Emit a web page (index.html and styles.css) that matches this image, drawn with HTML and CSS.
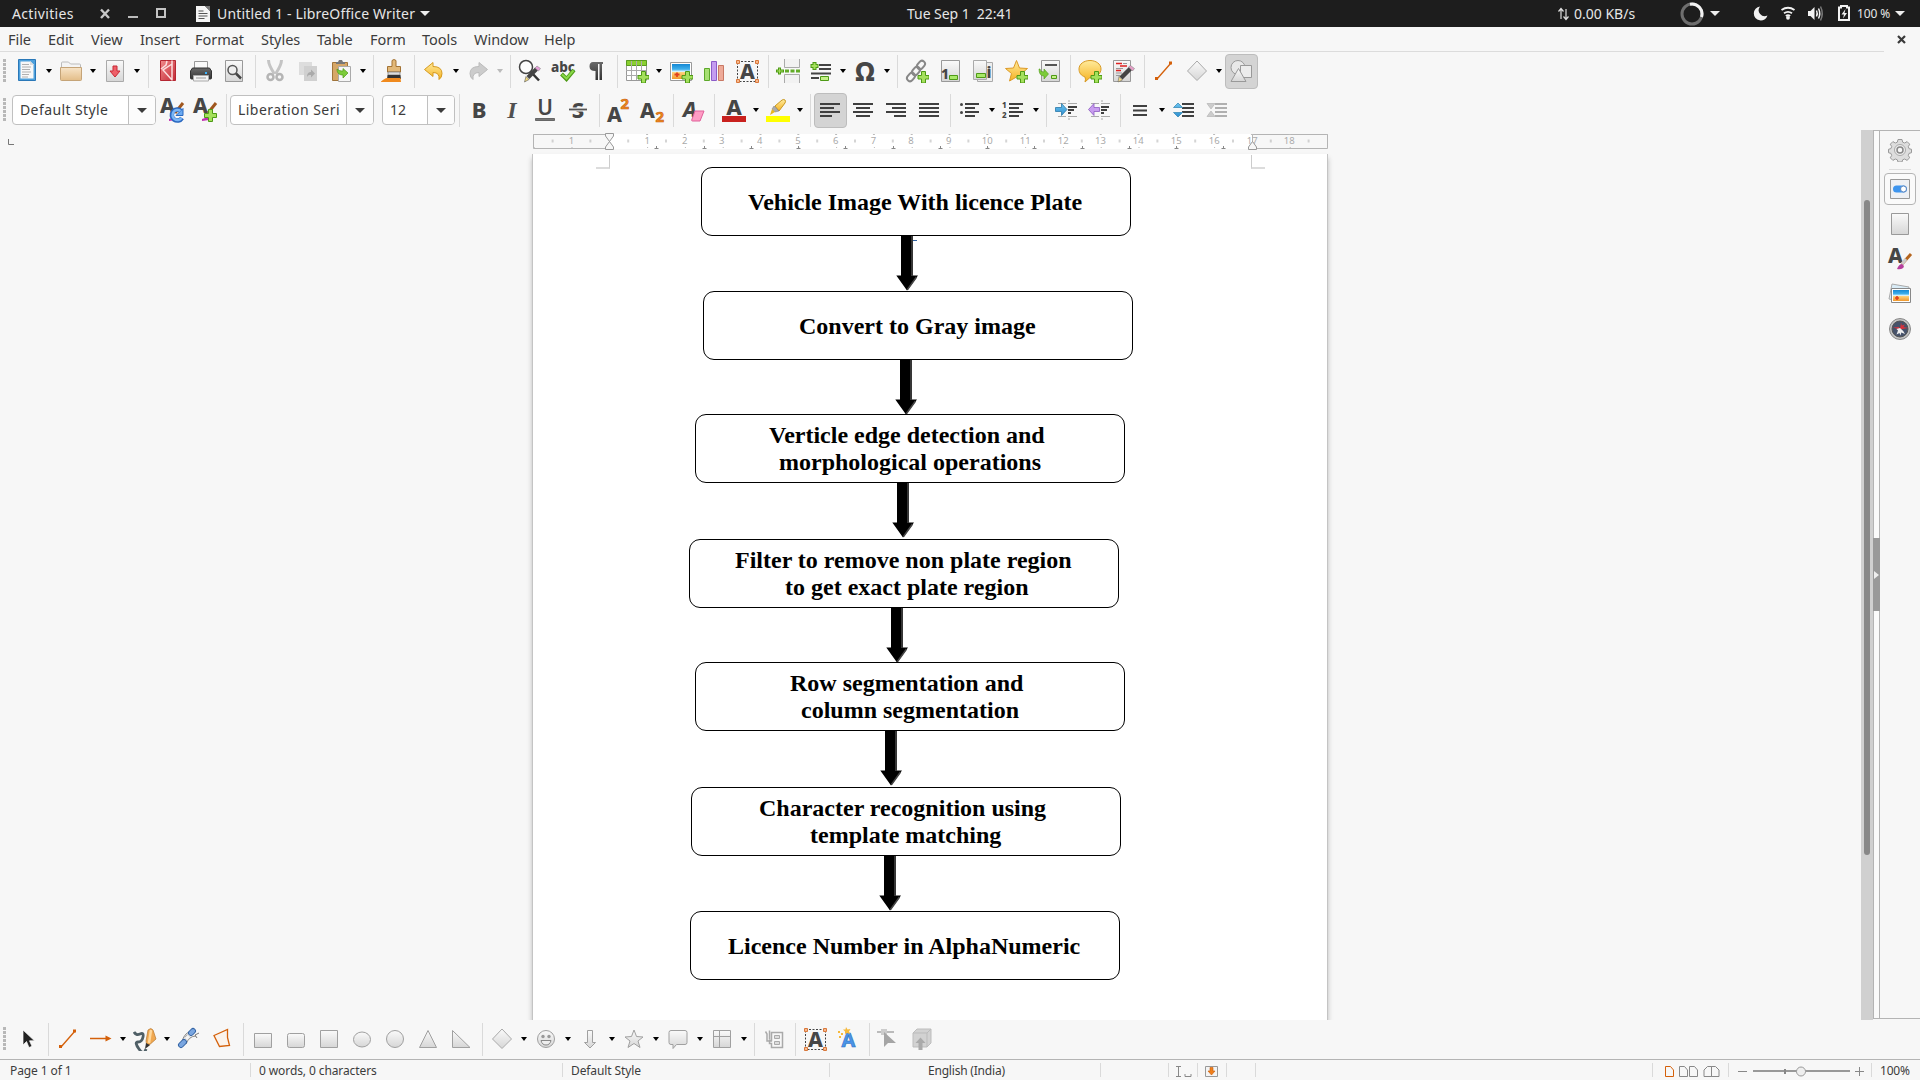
FILE: index.html
```html
<!DOCTYPE html>
<html lang="en">
<head>
<meta charset="utf-8">
<title>Untitled 1 - LibreOffice Writer</title>
<link rel="stylesheet" href="styles.css">
</head>
<body>
<svg class="defs" width="0" height="0" aria-hidden="true">
  <defs>
    <linearGradient id="gGray" x1="0" y1="0" x2="0" y2="1"><stop offset="0" stop-color="#fafafa"/><stop offset="1" stop-color="#d6d6d6"/></linearGradient>
    <linearGradient id="gDark" x1="0" y1="0" x2="0" y2="1"><stop offset="0" stop-color="#6a6a6a"/><stop offset="1" stop-color="#333"/></linearGradient>
    <linearGradient id="gGold" x1="0" y1="0" x2="0" y2="1"><stop offset="0" stop-color="#ffeb9c"/><stop offset="1" stop-color="#f5b222"/></linearGradient>
    <linearGradient id="gTan" x1="0" y1="0" x2="0" y2="1"><stop offset="0" stop-color="#f7e4c8"/><stop offset="1" stop-color="#e3bd88"/></linearGradient>
    <linearGradient id="gBlue" x1="0" y1="0" x2="0" y2="1"><stop offset="0" stop-color="#6cc4f0"/><stop offset="1" stop-color="#2f8fd0"/></linearGradient>
    <linearGradient id="gSky" x1="0" y1="0" x2="0" y2="1"><stop offset="0" stop-color="#1588d4"/><stop offset=".35" stop-color="#3fb0ec"/><stop offset=".5" stop-color="#d4f0fb"/><stop offset=".56" stop-color="#ffd27c"/><stop offset="1" stop-color="#f0982c"/></linearGradient>
    <linearGradient id="gRed" x1="0" y1="0" x2="1" y2="1"><stop offset="0" stop-color="#f08a8a"/><stop offset="1" stop-color="#c42a36"/></linearGradient>
    <pattern id="halfTicks" x="76.3" y="0" width="37.8" height="25" patternUnits="userSpaceOnUse">
      <path d="M18.900 10.500v3" stroke="#aaa"/><path d="M.5 5v1M.5 18v1M37.300 5v1" stroke="#bbb"/>
    </pattern>
  </defs>
  <symbol id="plus" viewBox="0 0 24 24"><path d="M16.500 12.500h4v4h3.500v3.500h-3.500v4h-4v-4h-3.500v-3.500h3.500z" fill="#a4e05c" stroke="#4e9a16"/></symbol>
  <symbol id="new" viewBox="0 0 24 24"><path d="M3.500.5h17v21h-17z" fill="#4da0dc" stroke="#2a78b8"/><path d="M5.500 2.500h10l3 3v14h-13z" fill="#f8f8f8"/><path d="M7 5.500h7M7 8h9M7 10.500h8M7 13h9M7 15.500h7M7 18h6" stroke="#b0b0b0"/><path d="M15 2v4h4z" fill="#ddd"/></symbol>
  <symbol id="open" viewBox="0 0 24 24"><path d="M2.500 6V4q0-1 1-1h6l2 2h9q1 0 1 1v4h-19z" fill="#f4f4f4" stroke="#bbb"/><path d="M1.500 8.500h21v12q0 1-1 1h-19q-1 0-1-1z" fill="url(#gTan)" stroke="#c5a478"/></symbol>
  <symbol id="save" viewBox="0 0 24 24"><path d="M3.500 1.500h17v21h-17z" fill="url(#gGray)" stroke="#aaa"/><path d="M10 7h4v5h3l-5 6-5-6h3z" fill="#ee5f68" stroke="#c82834"/></symbol>
  <symbol id="pdf" viewBox="0 0 24 24"><path d="M4.500 1.500h15v20h-15z" fill="url(#gRed)" stroke="#b52732"/><path d="M16 1.500v20M16 5L7 11l9 10M5 10l5-4 1-4" fill="none" stroke="#fbdede" stroke-width="1.500"/></symbol>
  <symbol id="print" viewBox="0 0 24 24"><path d="M5.500 2.500h13v8h-13z" fill="#fafafa" stroke="#999"/><path d="M3.500 9h17l2 3v7q0 1-1 1h-19q-1 0-1-1v-7z" fill="url(#gDark)" stroke="#333"/><path d="M16 13h2v2h-2z" fill="#39b4ff"/><path d="M4.500 16.500h15v5.500h-15z" fill="#f3f3f3" stroke="#aaa"/><path d="M7 19h10" stroke="#999"/></symbol>
  <symbol id="preview" viewBox="0 0 24 24"><path d="M3.500 1.500h17v21h-17z" fill="url(#gGray)" stroke="#999"/><circle cx="10.500" cy="11" r="4.500" fill="#eee" stroke="#555" stroke-width="1.500"/><path d="M14 14.500l5 5" stroke="#444" stroke-width="2.500"/></symbol>
  <symbol id="cut" viewBox="0 0 24 24"><path d="M5.500 1q0 5 6 14M18.500 1q0 5-6 14" fill="none" stroke="#c4c4c4" stroke-width="3"/><circle cx="7.500" cy="18" r="3" fill="none" stroke="#b5b5b5" stroke-width="2.500"/><circle cx="16.500" cy="18" r="3" fill="none" stroke="#b5b5b5" stroke-width="2.500"/></symbol>
  <symbol id="copy" viewBox="0 0 24 24"><path d="M3 3h13v13H3z" fill="#ddd"/><path d="M8 7h13v15H8z" fill="#d0d0d0"/><path d="M11 18c0-4 2-5 4-5v-2.500l4 4-4 4V16c-2 0-3 0-4 2z" fill="#aaa"/></symbol>
  <symbol id="paste" viewBox="0 0 24 24"><path d="M3.500 3.500h15v18h-15z" fill="#d6a767" stroke="#a0743a"/><path d="M7 5V3h2l1-2h3l1 2h2v2z" fill="#777"/><path d="M9.500 7.500h12v15h-12z" fill="#f6f6f6" stroke="#aaa"/><path d="M8 10c0 4 2 6 6 6v3l5-5-5-4.500V12c-3 0-4-.5-6-2z" fill="#7ccb3a" stroke="#4e9a16" stroke-width=".7"/></symbol>
  <symbol id="brush" viewBox="0 0 24 24"><path d="M11 1.500q2-2 4 0v6h4.500v5.500h-13V7.500H11z" fill="#e2b878" stroke="#a37335"/><path d="M7 13h12v3H7z" fill="#ddd" stroke="#777" stroke-width=".7"/><path d="M6.500 16h13l.5 4H6z" fill="#333"/><path d="M0 22.500q4-3.500 6-3.500h13.500l.5 4H0z" fill="#f08a1e"/></symbol>
  <symbol id="undo" viewBox="0 0 24 24"><path d="M2.500 10.500l8.500-7v4q9 0 9 7 0 4-3 6 1-7-6-7v4z" fill="url(#gGold)" stroke="#d59a20"/></symbol>
  <symbol id="redo" viewBox="0 0 24 24"><path d="M21.500 10.500l-8.500-7v4q-9 0-9 7 0 4 3 6-1-7 6-7v4z" fill="#ccc" stroke="#bbb"/></symbol>
  <symbol id="find" viewBox="0 0 24 24"><circle cx="8" cy="8" r="6.500" fill="#fdfdfd" stroke="#444" stroke-width="1.500"/><path d="M13 13l8 8.500" stroke="#333" stroke-width="2.500"/><path d="M10 18.500L18.500 10" stroke="#444" stroke-width="4"/><path d="M19 7l3.500 2.500-2 2.500-3.500-3z" fill="#e6a0d8" stroke="#777" stroke-width=".5"/><path d="M8 17.500l3 3-4.500 2.500z" fill="#f2d97c" stroke="#555" stroke-width=".6"/></symbol>
  <symbol id="para" viewBox="0 0 24 24"><path d="M9 3h10v2h-1v16h-2.500V5H14v16h-2.500v-9q-6 0-6-4.500T9 3z" fill="url(#gDark)"/></symbol>
  <symbol id="table" viewBox="0 0 24 24"><path d="M1.500 1.500h20v20h-20z" fill="#fff" stroke="#999"/><path d="M1.500 1.500h20v5h-20z" fill="#8ad030" stroke="#5a9a20"/><path d="M1 11.500h20M1 16.500h20M6.500 2v19M11.500 2v19M16.500 2v19" stroke="#aaa"/><use href="#plus"/></symbol>
  <symbol id="image" viewBox="0 0 24 24"><path d="M1.500 3.500h21v18h-21z" fill="#fff" stroke="#999"/><path d="M3 5h18v15H3z" fill="url(#gSky)"/><path d="M8 13.500v4.500M5.500 15.500h5" stroke="#e0401c" stroke-width="1.800"/><use href="#plus"/></symbol>
  <symbol id="chart" viewBox="0 0 24 24"><path d="M2.500 9.500h5v12h-5z" fill="#a8e074" stroke="#5da82a"/><path d="M9.500 2.500h5v19h-5z" fill="#c49cf0" stroke="#8c5cc8"/><path d="M16.500 6.500h5v15h-5z" fill="#eeaa98" stroke="#c87864"/></symbol>
  <symbol id="break" viewBox="0 0 24 24"><path d="M8.500 0v8.500h15V0M8.500 24v-8.500h15V24" fill="#f2f2f2" stroke="#aaa"/><path d="M3.500 8.500v7M0 12h8" stroke="#4e9a16" stroke-width="3"/><path d="M3.500 9.500v5M1 12h6" stroke="#a4e05c"/><path d="M9 12h15" stroke="#62ac28" stroke-width="3" stroke-dasharray="4 1.500"/></symbol>
  <symbol id="field" viewBox="0 0 24 24"><path d="M10 6h12M10 10h12M2 14.500h20M2 19h8" stroke="#444" stroke-width="2"/><path d="M5.500 3v8M1.500 7h8" stroke="#4e9a16" stroke-width="4"/><path d="M5.500 4v6M2.500 7h6" stroke="#a4e05c" stroke-width="2"/><path d="M11.500 17.500h8v4h-8z" fill="#c4f088" stroke="#4e9a16"/></symbol>
  <symbol id="link" viewBox="0 0 24 24"><g fill="none" stroke="#888" stroke-width="2"><rect x="-4.500" y="-3" width="9" height="6" rx="3" transform="translate(6 18) rotate(-50)"/><rect x="-4.500" y="-3" width="9" height="6" rx="3" transform="translate(11 12) rotate(-50)"/><rect x="-4.500" y="-3" width="9" height="6" rx="3" transform="translate(16 6) rotate(-50)"/></g><use href="#plus"/></symbol>
  <symbol id="star" viewBox="0 0 24 24"><path d="M12.500 1.500l3 7.500 8 .5-6 5 2 7.500-7-4-7 4 2-7.500-6-5 8-.5z" fill="url(#gGold)" stroke="#dc9a28"/><use href="#plus"/></symbol>
  <symbol id="xref" viewBox="0 0 24 24"><path d="M4.500 1.500h18v21h-18z" fill="url(#gGray)" stroke="#999"/><path d="M8 6h12" stroke="#555" stroke-width="2"/><path d="M3 10q0 3 4 3v-3l4.500 5L7 20v-3q-5 0-5-7z" fill="#7ccb3a" stroke="#4e9a16" stroke-width=".6"/><path d="M14.500 16.500h5v3h-5z" fill="#c4f088" stroke="#4e9a16"/></symbol>
  <symbol id="comment" viewBox="0 0 24 24"><path d="M12 1.500c6 0 11 3.500 11 8.500s-5 8.500-11 8.500l-5 4.500q1-3 0-5c-4-1.500-6-4-6-8 0-5 5-8.500 11-8.500z" fill="url(#gGold)" stroke="#d89a24"/><use href="#plus"/></symbol>
  <symbol id="track" viewBox="0 0 24 24"><path d="M2.500 1.500h17v21h-17z" fill="url(#gGray)" stroke="#999"/><path d="M5 4.500h6M9 7h7M5 11.500h5" stroke="#d22" stroke-width="1.500"/><path d="M12 4.500h4M5 9.500h7M5 14h6M5 16.500h4" stroke="#999"/><path d="M10 19L19.500 9.500" stroke="#444" stroke-width="4.500"/><path d="M19.500 6.500l4 3-2 2.500-4-4z" fill="#e6a0c8" stroke="#777" stroke-width=".5"/><path d="M8 17.500l3.500 3.500-4.500 2z" fill="#f5dc8a" stroke="#555" stroke-width=".5"/></symbol>
  <symbol id="line" viewBox="0 0 24 24"><path d="M5 20L19 4" stroke="#d4600a" stroke-width="1.300"/><path d="M3 18h3v3H3zM17 2.500h3v3h-3z" fill="#d4600a"/></symbol>
  <symbol id="diamond" viewBox="0 0 24 24"><path d="M12 2l9.500 10L12 21.500 2.500 12z" fill="url(#gGray)" stroke="#aaa"/></symbol>
  <symbol id="shapes" viewBox="0 0 24 24"><circle cx="9" cy="8.500" r="7" fill="#e8e8e8" stroke="#999"/><path d="M11.500 6.500h11v12h-11z" fill="#ececec" stroke="#999"/><path d="M9.500 9.500l7.500 13H2z" fill="url(#gGray)" stroke="#999"/></symbol>
  <symbol id="left" viewBox="0 0 24 24"><path d="M2 6h20M2 10h14M2 14h20M2 18h12" class="ln"/></symbol>
  <symbol id="center" viewBox="0 0 24 24"><path d="M2 6h20M5 10h14M2 14h20M5 18h14" class="ln"/></symbol>
  <symbol id="right" viewBox="0 0 24 24"><path d="M2 6h20M8 10h14M2 14h20M10 18h12" class="ln"/></symbol>
  <symbol id="just" viewBox="0 0 24 24"><path d="M2 6h20M2 10h20M2 14h20M2 18h20" class="ln"/></symbol>
  <symbol id="bullets" viewBox="0 0 24 24"><path d="M7 6h14M7 10h10M7 14h14M7 18h10" class="ln"/><circle cx="3.500" cy="6.500" r="1.500" fill="#444"/><circle cx="3.500" cy="14.500" r="1.500" fill="#444"/></symbol>
  <symbol id="indent" viewBox="0 0 24 24"><path d="M4 5.500h8M4 18.500h8M14 5.500h9M14 18.500h9M14 3h2M14 21h2" stroke="#aaa"/><path d="M14 9h9M14 12h6M14 15h3" class="ln"/><path d="M1.500 9.500h6v-4l5.500 6-5.500 6v-4h-6z" fill="url(#gBlue)" stroke="#2a78a8" stroke-width=".8"/></symbol>
  <symbol id="outdent" viewBox="0 0 24 24"><path d="M4 5.500h8M4 18.500h8M14 5.500h9M14 18.500h9M14 3h2M14 21h2" stroke="#aaa"/><path d="M14 9h8M14 12h6M14 15h3" class="ln"/><path d="M12.500 9.500H7v-4L1.500 11.500l5.500 6v-4h5.500z" fill="#c89cf0" stroke="#8c5cc0" stroke-width=".8"/></symbol>
  <symbol id="spacing" viewBox="0 0 24 24"><path d="M5 8h14M5 12.500h14M5 17h14" class="ln"/></symbol>
  <symbol id="incpar" viewBox="0 0 24 24"><path d="M10 6h12M10 10h12M10 14h12M10 18h12" class="ln"/><path d="M1.500 9.500L6 5l4.500 4.500zM1.500 14.500L6 19l4.500-4.500z" fill="url(#gBlue)" stroke="#3a8cb8" stroke-width=".8"/></symbol>
  <symbol id="decpar" viewBox="0 0 24 24"><path d="M10 6h12M10 10h12M10 14h12M10 18h12" stroke="#b0b0b0" stroke-width="2"/><path d="M2 5.500h8L6 11zM2 18.500h8L6 13z" fill="#ccc" stroke="#bbb" stroke-width=".8"/></symbol>
  <symbol id="pointer" viewBox="0 0 24 24"><path d="M8 3v15l3.500-3.500 2.500 6 3-1.200-2.500-5.500h5z" fill="#222" stroke="#fff" stroke-width=".7"/></symbol>
  <symbol id="arrow" viewBox="0 0 24 24"><path d="M1 11.500h17" stroke="#d4600a" stroke-width="1.500"/><path d="M16.500 8.500l6 3-6 3z" fill="#d4600a"/></symbol>
  <symbol id="curve" viewBox="0 0 24 24"><path d="M1 5q2 4 6 2t3 3-5 5 1 7 7 0" fill="none" stroke="#4f5f66" stroke-width="2.800"/><path d="M15 3q3-3 5 0l3 9-9 8-1-6z" fill="#f0a850" stroke="#b87830" stroke-width=".7"/><path d="M18 3l-2 13" stroke="#ffd79a" stroke-width="2.500"/><path d="M13 16l4 2-5 4z" fill="#333"/></symbol>
  <symbol id="connect" viewBox="0 0 24 24"><path d="M5 14Q8 5 15 4M9 17Q12 9 19 9" fill="none" stroke="#888"/><path d="M4 18l3-3M14 6l2-2" stroke="#3565a5" stroke-width="6" stroke-linecap="round"/><path d="M4 18l3-3M14 6l2-2" stroke="#7aa6e0" stroke-width="4" stroke-linecap="round"/><path d="M9 12l3-3" stroke="#999" stroke-width="5"/><path d="M9 12l3-3" stroke="#f4f4f4" stroke-width="3.500"/><path d="M18 8l4-2M18 8l2 3" stroke="#777"/></symbol>
  <symbol id="poly" viewBox="0 0 24 24"><path d="M4 8.500L17.500 2.500v8l2 8L9.500 19.500z" fill="#fbf3ec" stroke="#d4600a" stroke-width="1.300"/></symbol>
  <symbol id="rect" viewBox="0 0 24 24"><path d="M3.500 6.500h17v14h-17z" class="sh"/></symbol>
  <symbol id="rrect" viewBox="0 0 24 24"><rect x="3.500" y="6.500" width="17" height="14" rx="2" class="sh"/></symbol>
  <symbol id="square" viewBox="0 0 24 24"><path d="M3.500 3.500h17v17h-17z" class="sh"/></symbol>
  <symbol id="ellipse" viewBox="0 0 24 24"><ellipse cx="12" cy="12.500" rx="8.500" ry="7.500" class="sh"/></symbol>
  <symbol id="circle" viewBox="0 0 24 24"><circle cx="12" cy="12" r="8.500" class="sh"/></symbol>
  <symbol id="tri" viewBox="0 0 24 24"><path d="M12 3.500l8.500 17h-17z" class="sh"/></symbol>
  <symbol id="rtri" viewBox="0 0 24 24"><path d="M3.500 3.500l17.500 17H3.500z" class="sh"/></symbol>
  <symbol id="smile" viewBox="0 0 24 24"><circle cx="12" cy="12" r="8.500" class="sh"/><circle cx="9" cy="9.500" r="1.700" fill="#999"/><circle cx="15" cy="9.500" r="1.700" fill="#999"/><path d="M7 13.500h10q-1 4.500-5 4.500t-5-4.500z" fill="#eee" stroke="#888"/></symbol>
  <symbol id="darrow" viewBox="0 0 24 24"><path d="M9.500 3.500h5v12h3L12 21l-5.500-5.500h3z" class="sh"/></symbol>
  <symbol id="star2" viewBox="0 0 24 24"><path d="M12 3l2.500 6.500 6.500.5-5 4 2 6.500-6-4-6 4 2-6.500-5-4 6.500-.5z" class="sh"/></symbol>
  <symbol id="callout" viewBox="0 0 24 24"><path d="M5 3.500h14q2 0 2 2v10q0 2-2 2h-8.500L7 21.500v-4H5q-2 0-2-2v-10q0-2 2-2z" class="sh"/></symbol>
  <symbol id="flow" viewBox="0 0 24 24"><path d="M3.500 3.500h17v17h-17zM3.500 9.500h17M9.500 3.500v17" class="sh"/></symbol>
  <symbol id="points" viewBox="0 0 24 24"><path d="M3.500 4.500L5 7v7h5M7.500 3.500v9M9.500 5.500h11v15h-11v-4h-2v-3h2z" fill="none" stroke="#aaa" stroke-width="1.500"/><path d="M12.500 8.500h5v3h-5zM12.500 14.500h5v3h-5z" fill="#ddd" stroke="#aaa"/></symbol>
  <symbol id="editpt" viewBox="0 0 24 24"><path d="M0 5h17" stroke="#bbb" stroke-width="2"/><path d="M4 2h6v6H4z" fill="#ccc"/><path d="M7 5v15l4-4h8z" fill="#a5a5a5"/></symbol>
  <symbol id="extrude" viewBox="0 0 24 24"><path d="M3 6l4-4h14v14l-4 4H3z" fill="#d2d2d2" stroke="#bdbdbd"/><path d="M3 6h14v14M17 6l4-4" fill="none" stroke="#bbb"/><path d="M8.500 23v-7h-3l5-5.500 5 5.500h-3v7z" fill="#aaa"/></symbol>
  <symbol id="gear" viewBox="0 0 24 24"><path d="M10 1.500h4l.7 2.700 2 .8 2.400-1.400 2.600 2.600-1.400 2.500.8 2 2.400.6v3.400l-2.500.7-.7 2 1.400 2.400-2.700 2.600-2.400-1.400-1.900.8-.7 2.200h-4l-.7-2.200-2-.8-2.400 1.400-2.600-2.600 1.400-2.400-.8-2-2.400-.7v-3.400l2.400-.7.8-2-1.400-2.400 2.600-2.600L7.300 5l2-.8z" fill="#ddd" stroke="#999"/><circle cx="12" cy="12" r="5.500" fill="#eee" stroke="#aaa"/><circle cx="12" cy="12" r="3" fill="#f7f7f7" stroke="#888" stroke-width="1.500"/></symbol>
  <symbol id="props" viewBox="0 0 24 24"><path d="M2.500 2.500h19v19h-19z" fill="#eef0f4" stroke="#999"/><rect x="5" y="8.500" width="14" height="7" rx="3.500" fill="#3d94ee"/><circle cx="15.500" cy="12" r="3" fill="#fff" stroke="#5b86c0"/></symbol>
  <symbol id="pageic" viewBox="0 0 24 24"><path d="M3.500 1.500h17v21h-17z" fill="url(#gGray)" stroke="#999"/></symbol>
  <symbol id="gallery" viewBox="0 0 24 24"><path d="M4 2l17 3-3 15L1 17z" fill="#d9ecf7" stroke="#aaa"/><path d="M3.500 6.500h19v14h-19z" fill="#fff" stroke="#888"/><path d="M5 8h16v11H5z" fill="url(#gSky)"/><path d="M9 14v4M7 16h4" stroke="#e0401c" stroke-width="1.600"/></symbol>
  <symbol id="compass" viewBox="0 0 24 24"><circle cx="12" cy="12" r="10.500" fill="#c4c4c4" stroke="#888"/><circle cx="12" cy="12" r="8" fill="#46526a" stroke="#555"/><path d="M12 12.500l1-7 .8 3 3-1-1.300 2.500 4.500 1-5.500 1zM12 12.500L5 10.500l6-.5z" fill="#d8323c"/><path d="M12 11l-3.500 1 1.500 1.500-1.500 4 3-1.500 1 2.500.8-3 3.700 1.500-1.800-3z" fill="#eee"/></symbol>
</svg>

<header class="topbar">
  <span class="t-act">Activities</span>
  <svg class="t-win" width="64" height="27" viewBox="0 0 64 27"><path d="M1 9.500l8 8.500M9 9.500L1 18" stroke="#c8c8c8" stroke-width="2.400"/><path d="M28 17h10" stroke="#bbb" stroke-width="2"/><path d="M57 9h8v8h-8z" fill="none" stroke="#c4c4c4" stroke-width="2"/></svg>
  <svg class="t-doc" width="14" height="16" viewBox="0 0 14 16"><path d="M0 0h9l5 5v11H0z" fill="#f4f4f4"/><path d="M9 0l5 5V0z" fill="#777"/><path d="M2.500 5h5M2.500 7.500h9M2.500 10h9M2.500 12.500h6" stroke="#555"/></svg>
  <span class="t-title">Untitled 1 - LibreOffice Writer</span>
  <i class="tri-w"></i>
  <span class="t-clock">Tue Sep 1&nbsp; 22:41</span>
  <svg class="t-ud" width="11" height="14" viewBox="0 0 11 14"><path d="M3 12V2M.5 4.500L3 1.500l2.500 3M8 2v10M5.500 9.500L8 12.500l2.500-3" fill="none" stroke="#e0e0e0" stroke-width="1.200"/></svg>
  <span class="t-net">0.00 KB/s</span>
  <svg class="t-spin" width="24" height="24" viewBox="0 0 24 24"><circle cx="12" cy="12" r="10" fill="none" stroke="#6e6e6e" stroke-width="3"/><path d="M10 2.200A10 10 0 0 1 21.500 15" fill="none" stroke="#f2f2f2" stroke-width="3"/></svg>
  <i class="tri-w tw2"></i>
  <svg class="t-tray" width="100" height="27" viewBox="0 0 100 27"><path d="M7 6.500a7 7 0 1 0 7.500 9 6 6 0 0 1-7.500-9z" fill="#f2f2f2"/><g fill="none" stroke="#f2f2f2" stroke-width="1.900"><path d="M28.500 10q6.500-4.500 13 0M31 13.300q4-2.800 8 0"/><path d="M32.800 16q2.200-1.400 4.400 0"/></g><circle cx="35" cy="17.800" r="1.900" fill="#f2f2f2"/><path d="M55 11h2.500l4-4v13l-4-4H55z" fill="#f2f2f2"/><path d="M63.500 10.500q1.500 3 0 6M65.500 8.500q2.500 5 0 10" fill="none" stroke="#f2f2f2" stroke-width="1.500"/><path d="M67.500 6.500q3.500 7 0 14" fill="none" stroke="#777" stroke-width="1.500"/><path d="M86 7.500h2V6h6v1.500h2V20H86z" fill="none" stroke="#f2f2f2" stroke-width="2"/><path d="M92.500 9l-4 5.500H91l-1 4 4-5.500h-2.500z" fill="#f2f2f2"/></svg>
  <span class="t-pct">100 %</span>
  <i class="tri-w tw3"></i>
</header>

<nav class="menubar"><span>File</span><span>Edit</span><span>View</span><span>Insert</span><span>Format</span><span>Styles</span><span>Table</span><span>Form</span><span>Tools</span><span>Window</span><span>Help</span><svg class="close" width="9" height="9" viewBox="0 0 9 9"><path d="M1 1l7 7M8 1L1 8" stroke="#3a3a3a" stroke-width="2.200"/></svg></nav>

<div class="bar">
  <i class="grip"></i>
  <i class="b b0"><svg><use href="#new"/></svg></i><i class="d"></i>
  <i class="b b0"><svg><use href="#open"/></svg></i><i class="d"></i>
  <i class="b b0"><svg><use href="#save"/></svg></i><i class="d"></i>
  <i class="s"></i>
  <i class="b"><svg><use href="#pdf"/></svg></i><i class="b"><svg><use href="#print"/></svg></i><i class="b"><svg><use href="#preview"/></svg></i>
  <i class="s"></i>
  <i class="b"><svg><use href="#cut"/></svg></i><i class="b"><svg><use href="#copy"/></svg></i><i class="b"><svg><use href="#paste"/></svg></i><i class="d"></i>
  <i class="s"></i>
  <i class="b"><svg><use href="#brush"/></svg></i>
  <i class="s"></i>
  <i class="b"><svg><use href="#undo"/></svg></i><i class="d"></i><i class="b"><svg><use href="#redo"/></svg></i><i class="d off"></i>
  <i class="s"></i>
  <i class="b"><svg><use href="#find"/></svg></i><i class="b"><svg><text x="0" y="12.500" class="ic" font-size="14.500" textLength="24" lengthAdjust="spacingAndGlyphs">abc</text><path d="M10.500 15l5 5L23 11" fill="none" stroke="#4e9a16" stroke-width="4"/><path d="M11 15.500l4.500 4L22.500 11.500" fill="none" stroke="#8ad84a" stroke-width="2"/></svg></i><i class="b"><svg><use href="#para"/></svg></i>
  <i class="s"></i>
  <i class="b"><svg><use href="#table"/></svg></i><i class="d"></i><i class="b"><svg><use href="#image"/></svg></i><i class="b"><svg><use href="#chart"/></svg></i><i class="b"><svg><path d="M2.500 2.500h20v20h-20z" fill="none" stroke="#444" stroke-dasharray="2 1.500"/><text x="12.500" y="20" class="ic" text-anchor="middle" font-size="21">A</text><path d="M1.500 1.500h3v3h-3zM20.500 1.500h3v3h-3zM1.500 20.500h3v3h-3zM20.500 20.500h3v3h-3z" fill="#f8b88c" stroke="#d8783c"/></svg></i>
  <i class="s"></i>
  <i class="b"><svg><use href="#break"/></svg></i><i class="b"><svg><use href="#field"/></svg></i><i class="d"></i><i class="b"><svg><text x="12" y="22" class="ic" text-anchor="middle" font-size="26">Ω</text></svg></i><i class="d"></i>
  <i class="s"></i>
  <i class="b"><svg><use href="#link"/></svg></i><i class="b"><svg><path d="M3.500 1.500h18v21h-18z" fill="url(#gGray)" stroke="#999"/><text x="3" y="20" class="ic" font-size="14">1</text><path d="M11.500 16.500h8v4h-8z" fill="#a8e868" stroke="#4e9a16"/></svg></i><i class="b"><svg><path d="M6.500 3.500h15v19h-15z" fill="#eee" stroke="#aaa"/><path d="M2.500 1.500h13v19h-13z" fill="url(#gGray)" stroke="#aaa"/><path d="M5.500 14.500h9v4h-9z" fill="#a8e868" stroke="#4e9a16"/><text x="15.500" y="19" class="ic" font-size="16">i</text></svg></i><i class="b"><svg><use href="#star"/></svg></i><i class="b"><svg><use href="#xref"/></svg></i>
  <i class="s"></i>
  <i class="b"><svg><use href="#comment"/></svg></i><i class="b"><svg><use href="#track"/></svg></i>
  <i class="s"></i>
  <i class="b"><svg><use href="#line"/></svg></i><i class="b"><svg><use href="#diamond"/></svg></i><i class="d"></i><i class="b on"><svg><use href="#shapes"/></svg></i>
</div>

<div class="bar bar2">
  <i class="grip"></i>
  <div class="combo c1"><span>Default Style</span><i></i></div>
  <i class="b"><svg><text x="0" y="15" class="ic" font-size="21">A</text><path d="M23 5l-8 10" stroke="#a0561e" stroke-width="3"/><path d="M9 21l6-2 1 3-7 1z" fill="#c030b0"/><path d="M21 13A5.500 5.500 0 1 0 22 20" fill="none" stroke="#2a68c0" stroke-width="4.500"/><path d="M23 10.500v7h-7z" fill="#6aaaf2" stroke="#2a68c0"/><path d="M20.500 13A5 5 0 1 0 21.500 20" fill="none" stroke="#7ab6f6" stroke-width="2.500"/></svg></i><i class="b"><svg><text x="0" y="15" class="ic" font-size="21">A</text><path d="M23 5l-8 10" stroke="#a0561e" stroke-width="3"/><path d="M9 21l6-2 1 3-7 1z" fill="#c030b0"/><path d="M15.500 11.500h4v4h4v4h-4v4h-4v-4h-4v-4h4z" fill="#a4e05c" stroke="#4e9a16"/></svg></i>
  <i class="s s4"></i>
  <div class="combo c2"><span>Liberation Serif</span><i></i></div>
  <div class="combo c3"><span>12</span><i></i></div>
  <i class="s s4"></i>
  <i class="b"><svg><text x="12" y="20" class="ic" text-anchor="middle" font-size="22">B</text></svg></i><i class="b"><svg><text x="12" y="20" class="ici" text-anchor="middle" font-size="24">I</text></svg></i><i class="b"><svg><text x="12" y="17" class="ic icu" text-anchor="middle" font-size="21">U</text><path d="M2.500 20.500h19v2h-19z" fill="#777" stroke="#444" stroke-width=".7"/></svg></i><i class="b"><svg><text x="12" y="20" class="ic" text-anchor="middle" font-size="22">S</text><path d="M3 11.500h18" stroke="#f7f7f7" stroke-width="4"/><path d="M3 11.500h18" stroke="#555" stroke-width="1.800"/></svg></i>
  <i class="s"></i>
  <i class="b"><svg><text x="0" y="24" class="ic" font-size="21">A</text><text x="13.500" y="11" class="ico" font-size="15">2</text></svg></i><i class="b"><svg><text x="0" y="20" class="ic" font-size="21">A</text><text x="15.500" y="24" class="ico" font-size="15">2</text></svg></i>
  <i class="s"></i>
  <i class="b"><svg><text x="2" y="19" class="ic" font-size="21" font-style="italic">A</text><path d="M14 13h9l-4 10h-7.500q-1 0-.8-1z" fill="#ff9cc4" stroke="#e0609a"/></svg></i>
  <i class="s"></i>
  <i class="b"><svg><text x="12" y="16.500" class="ic" text-anchor="middle" font-size="22">A</text><path d="M0 18h24v6H0z" fill="#c9211e"/></svg></i><i class="d"></i><i class="b"><svg><path d="M9 8l7-6q2-1 3 0t0 3l-6 8z" fill="url(#gGold)" stroke="#c89820"/><path d="M8 8l5 5-4 1-3-3z" fill="#aaa" stroke="#777" stroke-width=".5"/><path d="M6 11l3 3-5 3z" fill="#e8b820"/><path d="M0 18h24v6H0z" fill="#ff0"/></svg></i><i class="d"></i>
  <i class="s"></i>
  <i class="b on"><svg><use href="#left"/></svg></i><i class="b"><svg><use href="#center"/></svg></i><i class="b"><svg><use href="#right"/></svg></i><i class="b"><svg><use href="#just"/></svg></i>
  <i class="s"></i>
  <i class="b"><svg><use href="#bullets"/></svg></i><i class="d"></i><i class="b"><svg><path d="M7 6h14M7 10h10M7 14h14M7 18h10" class="ln"/><text x="0" y="9.500" class="ic" font-size="8">1</text><text x="0" y="20" class="ic" font-size="8">2</text></svg></i><i class="d"></i>
  <i class="s"></i>
  <i class="b"><svg><use href="#indent"/></svg></i><i class="b"><svg><use href="#outdent"/></svg></i>
  <i class="s"></i>
  <i class="b"><svg><use href="#spacing"/></svg></i><i class="d"></i><i class="b"><svg><use href="#incpar"/></svg></i><i class="b"><svg><use href="#decpar"/></svg></i>
</div>

<main class="work">
  <section class="editor">
    <div class="rulerrow">
      <svg class="tabsel" width="8" height="8" viewBox="0 0 8 8"><path d="M1.500 1v5.500H7" fill="none" stroke="#777"/></svg>
      <svg class="ruler" width="795" height="25" viewBox="0 0 795 25">
        <path d="M76 5h643v15H76z" fill="#fff"/>
        <path d="M.5 5.500h76v14H.5zM719.500 5.500h75v14h-75z" fill="#f7f7f7" stroke="#b4b4b4"/>
        <path d="M0 5h795v15H0z" fill="url(#halfTicks)"/>
        <path class="tabs" d="M123.500 17v2.500m-2 0h4M171.500 17v2.500m-2 0h4M218.500 17v2.500m-2 0h4M265.500 17v2.500m-2 0h4M312.500 17v2.500m-2 0h4M360.500 17v2.500m-2 0h4M407.500 17v2.500m-2 0h4M454.500 17v2.500m-2 0h4M501.500 17v2.500m-2 0h4M549.500 17v2.500m-2 0h4M596.500 17v2.500m-2 0h4M643.500 17v2.500m-2 0h4M690.500 17v2.500m-2 0h4"/>
        <g class="nums"><text x="38.500" y="14.500">1</text><text x="114.200" y="14.500">1</text><text x="151.800" y="14.500">2</text><text x="188.700" y="14.500">3</text><text x="226.700" y="14.500">4</text><text x="265" y="14.500">5</text><text x="302.700" y="14.500">6</text><text x="340.500" y="14.500">7</text><text x="378" y="14.500">8</text><text x="415.700" y="14.500">9</text><text x="454.300" y="14.500">10</text><text x="492.200" y="14.500">11</text><text x="530.200" y="14.500">12</text><text x="567.500" y="14.500">13</text><text x="605.300" y="14.500">14</text><text x="643.300" y="14.500">15</text><text x="681.300" y="14.500">16</text><text x="719.200" y="14.500">17</text><text x="756.300" y="14.500">18</text></g>
        <path d="M72.500 4.500h8v2.500l-4 5.500-4-5.500zM72.500 20.500h8V18l-4-5.500-4 5.500zM715.500 20.500h8V18l-4-5.500-4 5.500z" fill="#f7f7f7" stroke="#999"/>
      </svg>
    </div>
    <div class="page">
      <i class="corner cl"></i><i class="corner cr"></i>
      <i class="caret"></i>
      <div class="node n1"><p>Vehicle Image With licence Plate</p></div>
      <div class="node n2"><p>Convert to Gray image</p></div>
      <div class="node n3"><p>Verticle edge detection and</p><p>morphological operations</p></div>
      <div class="node n4"><p>Filter to remove non plate region</p><p>to get exact plate region</p></div>
      <div class="node n5"><p>Row segmentation and</p><p>column segmentation</p></div>
      <div class="node n6"><p>Character recognition using</p><p>template matching</p></div>
      <div class="node n7"><p>Licence Number in AlphaNumeric</p></div>
      <svg class="arr a1" viewBox="0 0 22 55"><path d="M5 0h12v39.500h5L11.500 54 11 54.500.3 39.500H5z"/><path class="edge" d="M16 0v40M20.500 41L11.500 53.500"/></svg>
      <svg class="arr a2" viewBox="0 0 22 55"><path d="M5 0h12v39.500h5L11.500 54 11 54.500.3 39.500H5z"/><path class="edge" d="M16 0v40M20.500 41L11.500 53.500"/></svg>
      <svg class="arr a3" viewBox="0 0 22 55"><path d="M5 0h12v39.500h5L11.500 54 11 54.500.3 39.500H5z"/><path class="edge" d="M16 0v40M20.500 41L11.500 53.500"/></svg>
      <svg class="arr a4" viewBox="0 0 22 55"><path d="M5 0h12v39.500h5L11.500 54 11 54.500.3 39.500H5z"/><path class="edge" d="M16 0v40M20.500 41L11.500 53.500"/></svg>
      <svg class="arr a5" viewBox="0 0 22 55"><path d="M5 0h12v39.500h5L11.500 54 11 54.500.3 39.500H5z"/><path class="edge" d="M16 0v40M20.500 41L11.500 53.500"/></svg>
      <svg class="arr a6" viewBox="0 0 22 55"><path d="M5 0h12v39.500h5L11.500 54 11 54.500.3 39.500H5z"/><path class="edge" d="M16 0v40M20.500 41L11.500 53.500"/></svg>
    </div>
  </section>
  <div class="scroll"><i></i></div>
  <div class="split"><i></i></div>
  <aside class="side">
    <i class="si"><svg><use href="#gear"/></svg></i>
    <i class="sline"></i>
    <i class="si act"><svg><use href="#props"/></svg></i>
    <i class="si"><svg><use href="#pageic"/></svg></i>
    <i class="si"><svg><text x="0" y="16" class="ic" font-size="21">A</text><path d="M23 7l-9 10" stroke="#b5651e" stroke-width="3"/><path d="M18 12l-4 5" stroke="#ccc" stroke-width="3"/><path d="M9 22q2-5 5-5l2 2q-1 4-7 3z" fill="#b53f9c"/></svg></i>
    <i class="si"><svg><use href="#gallery"/></svg></i>
    <i class="si"><svg><use href="#compass"/></svg></i>
  </aside>
</main>

<div class="bar bar3">
  <i class="grip"></i>
  <i class="b"><svg><use href="#pointer"/></svg></i>
  <i class="s"></i>
  <i class="b"><svg><use href="#line"/></svg></i><i class="b"><svg><use href="#arrow"/></svg></i><i class="d"></i><i class="b"><svg><use href="#curve"/></svg></i><i class="d"></i><i class="b"><svg><use href="#connect"/></svg></i><i class="b"><svg><use href="#poly"/></svg></i>
  <i class="s"></i>
  <i class="b"><svg><use href="#rect"/></svg></i><i class="b"><svg><use href="#rrect"/></svg></i><i class="b"><svg><use href="#square"/></svg></i><i class="b"><svg><use href="#ellipse"/></svg></i><i class="b"><svg><use href="#circle"/></svg></i><i class="b"><svg><use href="#tri"/></svg></i><i class="b"><svg><use href="#rtri"/></svg></i>
  <i class="s"></i>
  <i class="b"><svg><use href="#diamond"/></svg></i><i class="d"></i><i class="b"><svg><use href="#smile"/></svg></i><i class="d"></i><i class="b"><svg><use href="#darrow"/></svg></i><i class="d"></i><i class="b"><svg><use href="#star2"/></svg></i><i class="d"></i><i class="b"><svg><use href="#callout"/></svg></i><i class="d"></i><i class="b"><svg><use href="#flow"/></svg></i><i class="d"></i>
  <i class="s"></i>
  <i class="b"><svg><use href="#points"/></svg></i>
  <i class="s"></i>
  <i class="b"><svg><path d="M2.500 2.500h20v20h-20z" fill="none" stroke="#444" stroke-dasharray="2 1.500"/><text x="12.500" y="20" class="ic" text-anchor="middle" font-size="21">A</text><path d="M1.500 1.500h3v3h-3zM20.500 1.500h3v3h-3zM1.500 20.500h3v3h-3zM20.500 20.500h3v3h-3z" fill="#f8b88c" stroke="#d8783c"/></svg></i><i class="b"><svg><text x="12.500" y="20" class="fw" text-anchor="middle" font-size="20">A</text><path d="M10 0l1.500 2.500 3-.5L13 4.500l1 2.500-3-1-2 1V4.500L7 2.500h2.500zM5 6h2v2H5zM2 4h2v2H2zM3 9h2v2H3z" fill="#f6b93c"/></svg></i>
  <i class="s"></i>
  <i class="b"><svg><use href="#editpt"/></svg></i><i class="b"><svg><use href="#extrude"/></svg></i>
</div>

<footer class="status">
  <span class="p1">Page 1 of 1</span><span class="p2">0 words, 0 characters</span><span class="p3">Default Style</span><span class="p4">English (India)</span><span></span>
  <span class="pi"><svg width="16" height="12" viewBox="0 0 16 12"><path d="M0 .5h5M2.500.5v10M0 10.500h5M9 8v2.500h6V8" fill="none" stroke="#888"/></svg></span>
  <span class="pi"><svg width="13" height="11" viewBox="0 0 13 11"><path d="M.5.5h12v10H.5z" fill="#f4f4f4" stroke="#999"/><path d="M5 1.500h3V5h2L6.500 9 3 5h2z" fill="#f0801c" stroke="#c85a08" stroke-width=".6"/></svg></span>
  <span></span><span></span>
  <span class="pv"><svg width="55" height="11" viewBox="0 0 55 11" fill="none" stroke="#888"><path d="M.5.5h5L8.500 4v6.500h-8z" stroke="#d4600a"/><path d="M14.500.5h5l3 3.500v6.500h-8zM24.500.5h5l3 3.500v6.500h-8zM46.500.5h-4l-3.500 3.500v6.500h7.500zM46.500.5h4L54 4v6.500h-7.500z"/></svg></span>
  <span class="pz"><svg width="128" height="11" viewBox="0 0 128 11"><path d="M0 5.500h9M117 5.500h9M121.500 1v9" stroke="#888"/><path d="M15 5h97" stroke="#999" stroke-width="2"/><path d="M47 3v5" stroke="#888" stroke-width="2"/><circle cx="63" cy="5.500" r="4.500" fill="#eee" stroke="#999"/></svg></span>
  <span class="pp">100%</span>
</footer>
</body>
</html>
```
FILE: styles.css
```css
* { box-sizing: border-box; }
body { margin: 0; width: 1920px; height: 1080px; overflow: hidden; display: flex; flex-direction: column; background: #f7f7f7; color: #3c3c3c; font-family: "Noto Sans", "Open Sans", sans-serif; font-size: 14px; }
i { font-style: normal; display: block; }
svg { display: block; }
.defs { position: absolute; }
.ic { font-family: "Noto Sans", sans-serif; font-weight: 800; fill: #464646; }
.icu { font-weight: 600; }
.ici { font-family: "Liberation Serif", serif; font-style: italic; font-weight: 700; fill: #505050; }
.ico { font-family: "Noto Sans", sans-serif; font-weight: 700; fill: #f0891e; stroke: #c8600c; stroke-width: .6px; }
.fw { font-family: "Noto Sans", sans-serif; font-weight: 700; fill: #4a94e8; stroke: #2a6cc0; stroke-width: .6px; }
.ln { stroke: #404040; stroke-width: 2px; fill: none; }
.sh { fill: url(#gGray); stroke: #a0a0a0; }

.topbar { flex: none; height: 27px; background: #1d1d1d; color: #e6e6e6; display: flex; align-items: center; white-space: nowrap; line-height: 27px; }
.t-act { width: 88px; padding-left: 12px; letter-spacing: .35px; }
.t-win { margin-left: 12px; overflow: visible; }
.t-doc { margin-left: 32px; }
.t-title { margin-left: 7px; width: 203px; letter-spacing: .18px; }
.tri-w { width: 0; border: 5px solid transparent; border-top-color: #eee; border-bottom: 0; }
.t-clock { margin-left: 477px; width: 105px; letter-spacing: -.05px; }
.t-ud { margin-left: 546px; }
.t-net { margin-left: 5px; width: 62px; letter-spacing: 0; }
.t-spin { margin-left: 44px; }
.tw2 { margin-left: 6px; }
.t-tray { margin-left: 33px; }
.t-pct { margin-left: 4px; width: 38px; font-size: 12px; letter-spacing: -.1px; }

.menubar { flex: none; height: 25px; display: grid; grid-template-columns: 40px 43px 49px 55px 66px 56px 53px 52px 52px 70px 50px 1fr; padding-left: 8px; line-height: 25px; background: linear-gradient(#dcdcdc, #dcdcdc) 0 24px / 1884px 1px no-repeat; font-size: 14.5px; letter-spacing: -.05px; }
.close { justify-self: end; margin: 8px 14px 0 0; }

.bar { flex: none; height: 39px; padding-top: 2px; display: flex; align-items: flex-start; }
.bar2 { height: 38px; }
.grip { flex: none; width: 3px; height: 23px; margin: 5px 5px 0 3px; background: repeating-linear-gradient(#b8b8b8 0 3px, transparent 3px 4px); }
.b { flex: none; width: 33px; height: 35px; padding: 5px 0 0 4px; }
.b svg, .si svg { width: 24px; height: 24px; overflow: visible; }
.on { background: #d4d4d4; border: 1px solid #bdbdbd; border-radius: 4px; padding: 4px 0 0 3px; }
.d { flex: none; width: 11px; height: 35px; padding-top: 15px; }
.d::before { content: ""; display: block; width: 0; margin-left: 2px; border: 3px solid transparent; border-top: 4px solid #000; border-bottom: 0; }
.d.off::before { border-top-color: #bbb; }
.s { flex: none; width: 1px; height: 33px; margin: 1px 3px 0 4px; background: #dadada; }
.b0 + .d + .s { margin-left: 5px; }
.combo { flex: none; height: 30px; margin-top: 2px; border: 1px solid #c0c0c0; border-radius: 4px; background: #fff; display: flex; line-height: 27px; white-space: nowrap; }
.combo span { flex: 1; min-width: 0; overflow: hidden; margin-left: 7px; margin-right: 6px; }
.combo i { flex: none; width: 27px; border-left: 1px solid #c0c0c0; background: #fcfcfc; border-radius: 0 3px 3px 0; padding: 12px 0 0 8px; }
.combo i::before { content: ""; display: block; width: 0; border: 5px solid transparent; border-top-color: #3c3c3c; border-bottom: 0; }
.c1 { margin-left: 1px; width: 144px; letter-spacing: .4px; }
.c2 { margin-left: 0; width: 144px; letter-spacing: .45px; }
.c3 { margin-left: 8px; width: 73px; }

.work { flex: none; height: 891px; display: flex; }
.editor { width: 1861px; display: flex; flex-direction: column; overflow: hidden; }
.rulerrow { flex: none; height: 25px; display: flex; }
.tabsel { margin: 9px 0 0 7px; }
.ruler { margin-left: 518px; }
.tabs { stroke: #888; fill: none; }
.nums { font: 9.5px "Noto Sans", sans-serif; fill: #aaa; text-anchor: middle; }
.page { position: relative; width: 796px; height: 866px; margin-left: 532px; background: #fff; border: solid #c4c4c4; border-width: 0 1px; box-shadow: 0 4px 5px #bbb; }
.corner { position: absolute; top: 1px; width: 14px; height: 14px; border-bottom: 2px solid #dcdcdc; }
.cl { left: 63px; border-right: 1px solid #ccc; }
.cr { left: 718px; border-left: 1px solid #ccc; }
.caret { position: absolute; left: 380px; top: 86px; width: 4px; height: 1px; background: #3465a4; }
.node { position: absolute; width: 430px; height: 69px; border: 1px solid #000; border-radius: 11px; display: flex; flex-direction: column; justify-content: center; font: bold 24px/27px "Liberation Serif", serif; color: #000; white-space: nowrap; }
.node p { margin: 0; }
.node p:only-child { margin-top: 2px; }
.n1 { left: 168px; top: 13px; } .n1 p { margin-left: 46px; }
.n2 { left: 170px; top: 137px; } .n2 p { margin-left: 95px; }
.n3 { left: 162px; top: 260px; } .n3 p { margin-left: 73px; } .n3 p + p { margin-left: 83px; }
.n4 { left: 156px; top: 385px; } .n4 p { margin-left: 45px; } .n4 p + p { margin-left: 95px; }
.n5 { left: 162px; top: 508px; } .n5 p { margin-left: 94px; } .n5 p + p { margin-left: 105px; }
.n6 { left: 158px; top: 633px; } .n6 p { margin-left: 67px; } .n6 p + p { margin-left: 118px; }
.n7 { left: 157px; top: 757px; } .n7 p { margin-left: 37px; }
.arr { position: absolute; width: 22px; height: 55px; }
.edge { stroke: #444; stroke-width: 1.6px; fill: none; }
.a1 { left: 363px; top: 82px; }
.a2 { left: 362px; top: 206px; }
.a3 { left: 359px; top: 329px; }
.a4 { left: 353px; top: 454px; }
.a5 { left: 347px; top: 577px; }
.a6 { left: 346px; top: 702px; }

.scroll { width: 12px; margin-top: 1px; background: #d0d0d0; padding: 70px 0 0 3px; }
.scroll i { width: 6px; height: 655px; background: #888; border-radius: 3px; }
.split { width: 7px; margin: 1px 0 1px 0; border: 1px solid #b4b4b4; background: #fbfbfb; padding-top: 407px; }
.split i { width: 5px; height: 73px; background: #999; display: flex; align-items: center; box-shadow: -1px 0 #999, 1px 0 #999; }
.split i::before { content: ""; border: 4px solid transparent; border-left: 5px solid #eee; border-right: 0; }
.side { flex: 1; margin: 1px 0 1px 0; border: solid #b4b4b4; border-width: 1px 0; padding-left: 4px; }
.si { width: 32px; height: 32px; padding: 4px; margin-top: 3px; }
.sline { width: 22px; height: 1px; margin: 3px 0 3px 5px; background: #ddd; }
.act { border: 1px solid #b4b4b4; border-radius: 4px; padding: 3px; background: #fafafa; margin-top: 0; }

.status { flex: none; height: 21px; border-top: 1px solid #b4b4b4; display: grid; grid-template-columns: 251px 312px 267px 271px 68px 29px 29px 29px 397px 76px 143px 48px; font-size: 12px; line-height: 21px; white-space: nowrap; letter-spacing: -.1px; }
.status span { background: linear-gradient(#dadada, #dadada) 100% 3px / 1px 14px no-repeat; }
.status .pp { background: none; padding-left: 8px; letter-spacing: -.2px; }
.p1 { padding-left: 10px; }
.p2, .p3 { padding-left: 8px; }
.p4 { padding-left: 98px; letter-spacing: -.2px; }
.pi { padding: 6px 0 0 7px; }
.pv { padding: 6px 0 0 12px; }
.pz { padding: 6px 0 0 9px; }
```
